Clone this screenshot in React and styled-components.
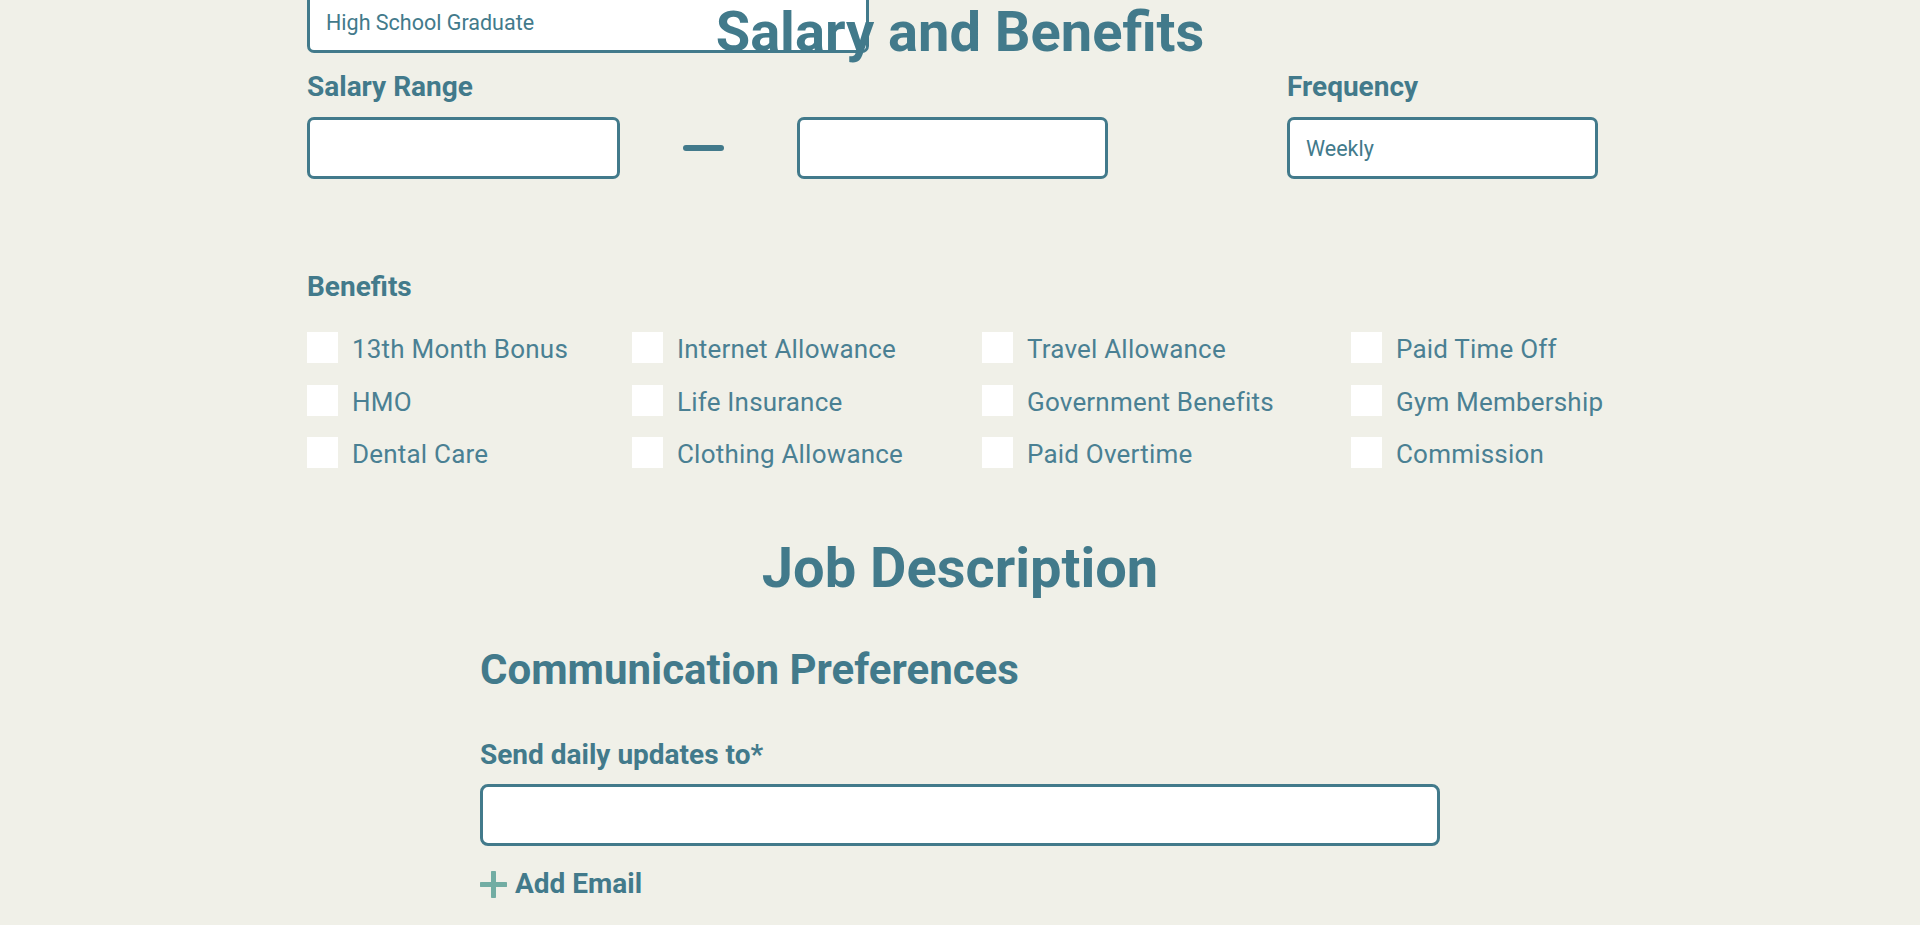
import styled, { createGlobalStyle } from 'styled-components';

const teal = '#427a8b';

const benefits = [
    '13th Month Bonus', 'Internet Allowance', 'Travel Allowance', 'Paid Time Off',
    'HMO', 'Life Insurance', 'Government Benefits', 'Gym Membership',
    'Dental Care', 'Clothing Allowance', 'Paid Overtime', 'Commission',
];

export default function App() {
    return (
        <>
            <GlobalStyle />
            <Page>
                <Wide>
                    <PrevInput defaultValue="High School Graduate" readOnly />
                    <SectionTitle $overlap>Salary and Benefits</SectionTitle>

                    <SalaryGrid>
                        <Label style={{ gridColumn: 1 }}>Salary Range</Label>
                        <Label style={{ gridColumn: 5 }}>Frequency</Label>
                        <TextInput />
                        <Dash />
                        <TextInput />
                        <span />
                        <TextInput defaultValue="Weekly" readOnly />
                    </SalaryGrid>

                    <Label $spaced>Benefits</Label>
                    <BenefitGrid>
                        {benefits.map((b) => (
                            <BenefitItem key={b}>
                                <Check type="checkbox" />
                                <BenefitText>{b}</BenefitText>
                            </BenefitItem>
                        ))}
                    </BenefitGrid>
                </Wide>

                <SectionTitle>Job Description</SectionTitle>

                <Narrow>
                    <SubTitle>Communication Preferences</SubTitle>
                    <Label>Send daily updates to*</Label>
                    <EmailInput />
                    <AddButton type="button">
                        <svg width="27" height="27" viewBox="0 0 27 27">
                            <path d="M13.5 1.5v24M1.5 13.5h24" stroke="#72ada3" strokeWidth="5" strokeLinecap="round" />
                        </svg>
                        Add Email
                    </AddButton>
                </Narrow>
            </Page>
        </>
    );
}

const GlobalStyle = createGlobalStyle`
  html, body {
    margin: 0;
    background: #f0f0e8;
    font-family: Roboto, "Noto Sans", sans-serif;
    color: ${teal};
    overflow: hidden;
  }
`;

const Page = styled.div`
  margin-top: -9px;
  display: flex;
  flex-direction: column;
  align-items: center;
`;

const Wide = styled.div`
  width: 1306px;
  display: flex;
  flex-direction: column;
`;

const Narrow = styled.div`
  width: 960px;
  display: flex;
  flex-direction: column;
  margin-top: 48px;
`;

const SectionTitle = styled.h2`
  margin: ${(p) => (p.$overlap ? '-51px 0 9px' : '70px 0 0')};
  position: relative;
  font-size: 56px;
  line-height: 60px;
  font-weight: 700;
  text-align: center;
`;

const SubTitle = styled.h3`
  margin: 0 0 45px;
  font-size: 42px;
  line-height: 48px;
  font-weight: 700;
`;

const Label = styled.div`
  font-size: 28px;
  line-height: 32px;
  font-weight: 700;
  margin-top: ${(p) => (p.$spaced ? '92px' : '0')};
`;

const SalaryGrid = styled.div`
  display: grid;
  grid-template-columns: 313px 177px 311px 179px 311px;
  row-gap: 14px;
  align-items: center;
`;

const inputBase = `
  box-sizing: border-box;
  height: 62px;
  border: 3px solid ${teal};
  border-radius: 7px;
  background: #fff;
  padding: 0 16px;
  font-family: Roboto, "Noto Sans", sans-serif;
  font-size: 21.5px;
  color: ${teal};
  outline: none;
`;

const PrevInput = styled.input`
  ${inputBase}
  width: 562px;
`;

const TextInput = styled.input`
  ${inputBase}
  width: 100%;
`;

const Dash = styled.div`
  width: 41px;
  height: 6px;
  border-radius: 3px;
  background: ${teal};
  margin-left: 63px;
`;

const BenefitGrid = styled.div`
  display: grid;
  grid-template-columns: 325px 350px 369px auto;
  row-gap: 21.5px;
  margin-top: 29px;
`;

const BenefitItem = styled.label`
  display: flex;
  align-items: center;
  gap: 14px;
  height: 31px;
`;

const BenefitText = styled.span`
  font-size: 26px;
  line-height: 31px;
  letter-spacing: 0.2px;
  padding-top: 4px;
  color: #4a8093;
`;

const Check = styled.input`
  appearance: none;
  margin: 0;
  width: 31px;
  height: 31px;
  background: #fff;
  border: none;
  flex-shrink: 0;
`;

const EmailInput = styled.input`
  ${inputBase}
  height: 62px;
  border-radius: 8px;
  width: 100%;
  margin-top: 13px;
`;

const AddButton = styled.button`
  margin-top: 22px;
  align-self: flex-start;
  display: flex;
  align-items: center;
  gap: 8px;
  padding: 0;
  border: none;
  background: none;
  font-family: Roboto, "Noto Sans", sans-serif;
  font-size: 28px;
  line-height: 32px;
  font-weight: 700;
  color: ${teal};
`;
